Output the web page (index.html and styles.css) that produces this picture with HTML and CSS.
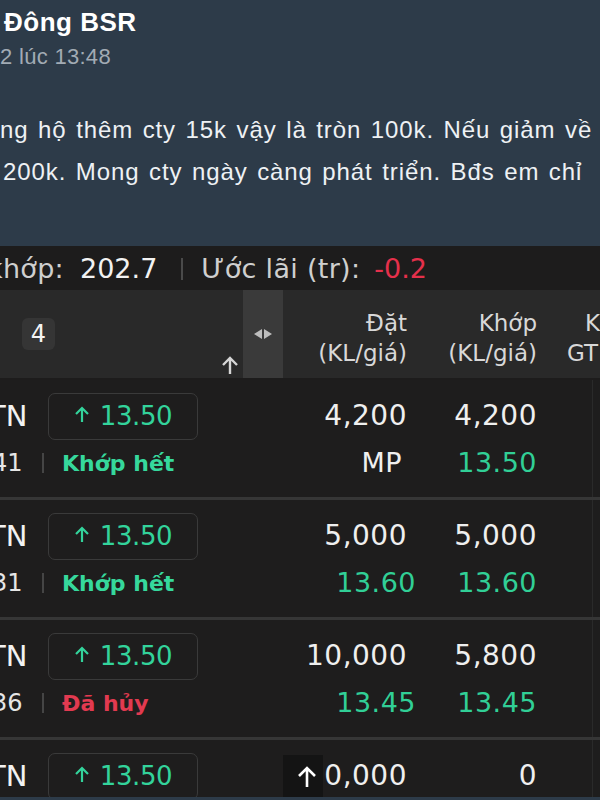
FILE: index.html
```html
<!DOCTYPE html>
<html lang="vi">
<head>
  <meta charset="UTF-8" />
  <meta name="viewport" content="width=device-width, initial-scale=1.0"/>
  <title>Đông BSR</title>
  <link rel="stylesheet" href="styles.css">
</head>
<body>
  <div class="post">
    <div class="post-name">Đông BSR</div>
    <div class="post-time">2 lúc 13:48</div>
    <div class="post-text">
      <p class="line">ng hộ thêm cty 15k vậy là tròn 100k. Nếu giảm về</p>
      <p class="line line-2">200k. Mong cty ngày càng phát triển. Bđs em chỉ</p>
    </div>
  </div>

  <div class="app">
    <div class="stats">
      <span class="stat-label cut">khớp:</span>
      <span class="stat-value">202.7</span>
      <span class="divider"></span>
      <span class="stat-label">Ước lãi (tr):</span>
      <span class="stat-value down">-0.2</span>
    </div>

    <div class="table-head">
      <div class="head-left">
        <span class="count">4</span>
        <svg class="sort-arrow" width="20" height="20" viewBox="0 0 20 20">
          <path d="M10 19 V3 M3 10 L10 3 L17 10" fill="none" stroke="#d6d6d6" stroke-width="2.4"/>
        </svg>
      </div>
      <div class="resize">
        <svg width="20" height="10" viewBox="0 0 20 10">
          <path d="M9 0 L1 5 L9 10 Z M11 0 L19 5 L11 10 Z" fill="#bdbdbd"/>
        </svg>
      </div>
      <div class="head-col">Đặt<br>(KL/giá)</div>
      <div class="head-col">Khớp<br>(KL/giá)</div>
      <div class="head-col head-last"><span class="k">K</span><br>GT</div>
    </div>

    <div class="order">
      <div class="order-left">
        <div class="order-top">
          <span class="side">TN</span>
          <span class="price-box">
            <svg class="up" width="16" height="16" viewBox="0 0 16 16"><path d="M8 16 V2 M2 8 L8 2 L14 8" fill="none" stroke="#33d39b" stroke-width="2.2"/></svg>
            13.50
          </span>
        </div>
        <div class="order-bottom">
          <span class="time">41</span>
          <span class="bar"></span>
          <span class="status ok">Khớp hết</span>
        </div>
      </div>
      <div class="cell">
        <span class="num">4,200</span>
        <span class="sub sub-set">MP</span>
      </div>
      <div class="cell">
        <span class="num">4,200</span>
        <span class="sub green">13.50</span>
      </div>
      <div class="cell-last"></div>
    </div>

    <div class="order">
      <div class="order-left">
        <div class="order-top">
          <span class="side">TN</span>
          <span class="price-box">
            <svg class="up" width="16" height="16" viewBox="0 0 16 16"><path d="M8 16 V2 M2 8 L8 2 L14 8" fill="none" stroke="#33d39b" stroke-width="2.2"/></svg>
            13.50
          </span>
        </div>
        <div class="order-bottom">
          <span class="time">31</span>
          <span class="bar"></span>
          <span class="status ok">Khớp hết</span>
        </div>
      </div>
      <div class="cell">
        <span class="num">5,000</span>
        <span class="sub green sub-price">13.60</span>
      </div>
      <div class="cell">
        <span class="num">5,000</span>
        <span class="sub green">13.60</span>
      </div>
      <div class="cell-last"></div>
    </div>

    <div class="order">
      <div class="order-left">
        <div class="order-top">
          <span class="side">TN</span>
          <span class="price-box">
            <svg class="up" width="16" height="16" viewBox="0 0 16 16"><path d="M8 16 V2 M2 8 L8 2 L14 8" fill="none" stroke="#33d39b" stroke-width="2.2"/></svg>
            13.50
          </span>
        </div>
        <div class="order-bottom">
          <span class="time">36</span>
          <span class="bar"></span>
          <span class="status cancel">Đã hủy</span>
        </div>
      </div>
      <div class="cell">
        <span class="num">10,000</span>
        <span class="sub green sub-price">13.45</span>
      </div>
      <div class="cell">
        <span class="num">5,800</span>
        <span class="sub green">13.45</span>
      </div>
      <div class="cell-last"></div>
    </div>

    <div class="order">
      <div class="order-left">
        <div class="order-top">
          <span class="side">TN</span>
          <span class="price-box">
            <svg class="up" width="16" height="16" viewBox="0 0 16 16"><path d="M8 16 V2 M2 8 L8 2 L14 8" fill="none" stroke="#33d39b" stroke-width="2.2"/></svg>
            13.50
          </span>
        </div>
      </div>
      <div class="cell">
        <span class="num">10,000</span>
        <span class="to-top">
          <svg width="22" height="22" viewBox="0 0 22 22"><path d="M11 22 V3 M3 11 L11 3 L19 11" fill="none" stroke="#ffffff" stroke-width="2.6"/></svg>
        </span>
      </div>
      <div class="cell">
        <span class="num">0</span>
      </div>
      <div class="cell-last"></div>
    </div>
  </div>
</body>
</html>
```

FILE: styles.css
```css
* {
  margin: 0;
  padding: 0;
  box-sizing: border-box;
}

body {
  width: 600px;
  height: 800px;
  overflow: hidden;
  background: #2d3b49;
  font-family: "Liberation Sans", Arial, sans-serif;
}

/* facebook post on top */
.post {
  height: 246px;
  overflow: hidden;
  white-space: nowrap;
  background: #2d3b49;
  color: #eef1f4;
}

.post-name {
  margin: 6px 0 0 4px;
  font-size: 26px;
  font-weight: bold;
  line-height: 32px;
  letter-spacing: 0.5px;
  color: #ffffff;
}

.post-time {
  margin-top: 5px;
  font-size: 22px;
  line-height: 28px;
  letter-spacing: 0.3px;
  color: #a2abb4;
}

.post-text {
  margin-top: 38px;
  font-size: 24px;
  line-height: 42px;
  letter-spacing: 0.9px;
  word-spacing: 2px;
}

.line-2 {
  padding-left: 3px;
}

/* trading app screenshot */
.app {
  height: 551px;
  overflow: hidden;
  background: #1d1c1c;
  color: #efefef;
  font-family: "DejaVu Sans", sans-serif;
}

.stats {
  display: flex;
  align-items: center;
  height: 44px;
  padding-top: 2px;
  font-size: 27px;
  line-height: 30px;
  white-space: nowrap;
}

.stat-label {
  color: #cfcfcf;
  margin-left: 18px;
  letter-spacing: 0.3px;
}

.stat-label.cut {
  margin-left: -13px;
}

.stat-value {
  margin-left: 16px;
  color: #f2f2f2;
}

.stat-value.down {
  margin-left: 14px;
  color: #e5304b;
}

.divider {
  width: 2px;
  height: 22px;
  margin-left: 24px;
  background: #4a4a4a;
}

.table-head {
  display: grid;
  grid-template-columns: 243px 40px 124px 130px 1fr;
  height: 88px;
  margin-bottom: 2px;
  background: #292929;
}

.head-left {
  display: flex;
  align-items: center;
  padding-left: 22px;
}

.count {
  width: 33px;
  height: 32px;
  border-radius: 6px;
  background: #353535;
  color: #f4f4f4;
  font-size: 24px;
  line-height: 32px;
  text-align: center;
}

.sort-arrow {
  align-self: flex-end;
  margin: 0 3px 3px auto;
}

.resize {
  display: flex;
  align-items: center;
  justify-content: center;
  background: #3a3a3a;
}

.head-col {
  padding-top: 18px;
  font-size: 23px;
  line-height: 30px;
  text-align: right;
  color: #d8d8d8;
  white-space: nowrap;
}

.head-last {
  padding-left: 30px;
  text-align: left;
}

.head-last .k {
  margin-left: 18px;
}

.order {
  display: grid;
  grid-template-columns: 243px 164px 130px 1fr;
  height: 120px;
  padding-top: 13px;
  border-bottom: 3px solid #363636;
  background: #1e1d1d;
}

.order-top {
  display: flex;
  align-items: center;
  height: 46px;
}

.side {
  width: 60px;
  margin-left: -12px;
  font-size: 29px;
  color: #f2f2f2;
}

.price-box {
  display: flex;
  align-items: center;
  justify-content: center;
  gap: 10px;
  width: 150px;
  height: 47px;
  border: 1.5px solid #3a3a3a;
  border-radius: 7px;
  color: #33d39b;
  font-size: 26px;
  letter-spacing: -0.4px;
}

.price-box .up {
  align-self: flex-start;
  margin-top: 12px;
}

.order-bottom {
  display: flex;
  align-items: center;
  height: 30px;
  margin-top: 9px;
  white-space: nowrap;
}

.time {
  width: 50px;
  margin-left: -8px;
  font-size: 24px;
  color: #e6e6e6;
}

.bar {
  width: 2px;
  height: 20px;
  background: #454545;
}

.status {
  margin-left: 18px;
  font-size: 22px;
  font-weight: bold;
}

.status.ok {
  color: #36d89c;
}

.status.cancel {
  color: #e23a50;
}

.cell {
  position: relative;
  display: flex;
  flex-direction: column;
  align-items: flex-end;
}

.num {
  height: 46px;
  font-size: 28px;
  line-height: 46px;
  letter-spacing: 0.5px;
}

.sub {
  height: 30px;
  margin-top: 9px;
  font-size: 27px;
  line-height: 30px;
  letter-spacing: 0.5px;
}

.sub-set {
  margin-right: 5px;
}

.sub-price {
  margin-right: -9px;
}

.green {
  color: #31cf96;
}

.cell-last {
  margin-left: 55px;
  margin-top: -13px;
  border-left: 1px solid #2a2a2a;
}

/* scroll to top button over the last row */
.to-top {
  position: absolute;
  left: 40px;
  top: 2px;
  width: 40px;
  height: 60px;
  padding: 10px 0 0 13px;
  background: #141414;
}
```
